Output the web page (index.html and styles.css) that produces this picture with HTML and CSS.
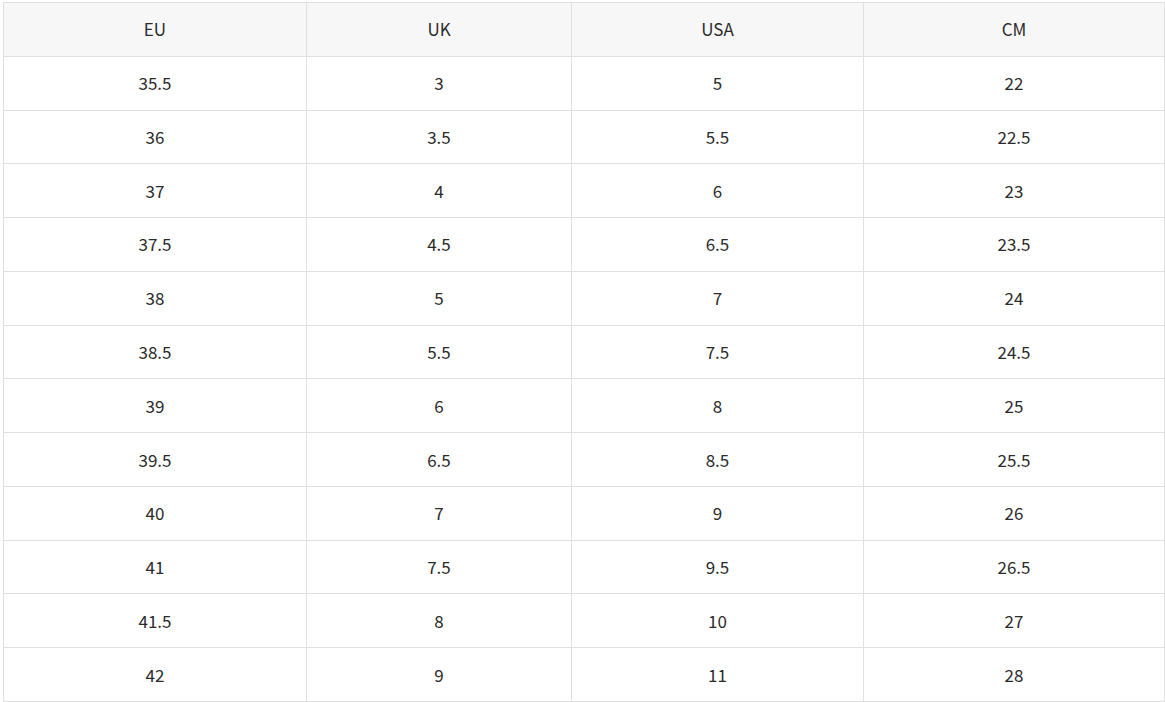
FILE: index.html
```html
<!DOCTYPE html>
<html>
<head>
<meta charset="utf-8">
<link rel="stylesheet" href="styles.css">
</head>
<body>
<div class="wrap">
<table class="size-table">
<colgroup><col class="c1"><col class="c2"><col class="c3"><col class="c4"></colgroup>
<thead>
<tr><th>EU</th><th>UK</th><th>USA</th><th>CM</th></tr>
</thead>
<tbody>
<tr><td>35.5</td><td>3</td><td>5</td><td>22</td></tr>
<tr><td>36</td><td>3.5</td><td>5.5</td><td>22.5</td></tr>
<tr><td>37</td><td>4</td><td>6</td><td>23</td></tr>
<tr><td>37.5</td><td>4.5</td><td>6.5</td><td>23.5</td></tr>
<tr><td>38</td><td>5</td><td>7</td><td>24</td></tr>
<tr><td>38.5</td><td>5.5</td><td>7.5</td><td>24.5</td></tr>
<tr><td>39</td><td>6</td><td>8</td><td>25</td></tr>
<tr><td>39.5</td><td>6.5</td><td>8.5</td><td>25.5</td></tr>
<tr><td>40</td><td>7</td><td>9</td><td>26</td></tr>
<tr><td>41</td><td>7.5</td><td>9.5</td><td>26.5</td></tr>
<tr><td>41.5</td><td>8</td><td>10</td><td>27</td></tr>
<tr><td>42</td><td>9</td><td>11</td><td>28</td></tr>
</tbody>
</table>
</div>
</body>
</html>
```
FILE: styles.css
```css
html, body {
  margin: 0;
  padding: 0;
  background: #ffffff;
}
.wrap {
  padding: 2px 1px 0 3px;
}
.size-table {
  width: 1161px;
  border-collapse: collapse;
  table-layout: fixed;
  font-family: "Noto Sans CJK KR", "Noto Sans", sans-serif;
  font-size: 17px;
  color: #2b2b2b;
}
.c1 { width: 303px; }
.c2 { width: 265px; }
.c3 { width: 292px; }
.c4 { width: 301px; }
.size-table th,
.size-table td {
  border: 1px solid #e0e0e0;
  text-align: center;
  vertical-align: middle;
  padding: 0 0 1px;
  height: 51.77px;
  font-weight: normal;
}
.size-table th {
  background: #f7f7f7;
  padding: 0 0 2px;
  height: 50.77px;
}
```
